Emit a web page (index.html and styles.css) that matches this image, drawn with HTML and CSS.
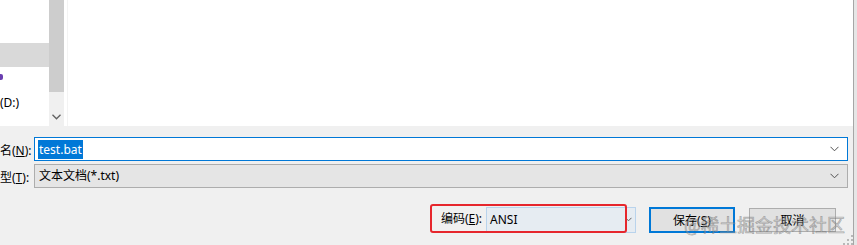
FILE: index.html
```html
<!DOCTYPE html>
<html lang="zh-CN">
<head>
<meta charset="utf-8">
<title>另存为</title>
<link rel="stylesheet" href="styles.css">
</head>
<body>
<div class="window">
  <div class="content">
    <div class="browser">
      <div class="nav">
        <div class="nav-row selected"></div>
        <div class="nav-row"><span class="purple-mark"></span></div>
        <div class="nav-row"><span class="nav-text">(D:)</span></div>
      </div>
      <div class="vscroll">
        <div class="thumb"></div>
        <div class="track">
          <svg class="arrow" width="9" height="6" viewBox="0 0 9 6"><polyline points="0.5,0.8 4.5,4.8 8.5,0.8" fill="none" stroke="#606060" stroke-width="1.3"/></svg>
        </div>
      </div>
      <div class="splitter"></div>
      <div class="files"></div>
    </div>

    <div class="fields">
      <div class="field-row">
        <div class="label">名(<u>N</u>):</div>
        <div class="input active">
          <span class="sel">test.bat</span>
          <svg class="chev" width="9" height="6" viewBox="0 0 9 6"><polyline points="0.5,0.8 4.5,4.8 8.5,0.8" fill="none" stroke="#505050" stroke-width="1"/></svg>
        </div>
      </div>
      <div class="field-row">
        <div class="label">型(<u>T</u>):</div>
        <div class="input combo">
          <span class="val">文本文档(*.txt)</span>
          <svg class="chev" width="9" height="6" viewBox="0 0 9 6"><polyline points="0.5,0.8 4.5,4.8 8.5,0.8" fill="none" stroke="#505050" stroke-width="1"/></svg>
        </div>
      </div>
    </div>

    <div class="actions">
      <div class="encoding">
        <span class="enc-label">编码(<u>E</u>):</span>
        <div class="enc-combo">
          <span class="val">ANSI</span>
          <svg class="chev small" width="7" height="5" viewBox="0 0 7 5"><polyline points="0.5,0.8 3.5,3.8 6.5,0.8" fill="none" stroke="#606060" stroke-width="1"/></svg>
        </div>
        <div class="highlight-box"></div>
      </div>
      <div class="btn primary">保存(<u>S</u>)</div>
      <div class="btn">取消</div>
    </div>

    <div class="watermark">@稀土掘金技术社区</div>
    <svg class="grip" width="10" height="10" viewBox="0 0 10 10">
      <rect x="8" y="0" width="2" height="2" fill="#b8b8b8"/>
      <rect x="4" y="4" width="2" height="2" fill="#b8b8b8"/>
      <rect x="8" y="4" width="2" height="2" fill="#b8b8b8"/>
      <rect x="0" y="8" width="2" height="2" fill="#b8b8b8"/>
      <rect x="4" y="8" width="2" height="2" fill="#b8b8b8"/>
      <rect x="8" y="8" width="2" height="2" fill="#b8b8b8"/>
    </svg>
  </div>
  <div class="frame-edge"></div>
</div>
</body>
</html>
```

FILE: styles.css
```css
html, body {
  margin: 0;
  padding: 0;
  background: #f0f0f0;
  overflow: hidden;
}
body {
  font-family: "Segoe UI", "Noto Sans", "Noto Sans CJK SC", sans-serif;
  font-size: 12px;
  color: #000;
}
u { text-decoration: underline; text-underline-offset: 1px; }

.window {
  display: flex;
  width: 857px;
  height: 245px;
}
.content {
  width: 853px;
  position: relative;
}
.frame-edge {
  width: 4px;
  border-left: 1px solid #a6a6a6;
  background: #e6e6e6;
  box-sizing: border-box;
}

.browser {
  display: flex;
  height: 126px;
  background: #fff;
}
.nav {
  width: 49px;
  padding-top: 43px;
  box-sizing: border-box;
  overflow: hidden;
}
.nav-row {
  height: 24px;
  display: flex;
  align-items: center;
  white-space: nowrap;
}
.nav-row.selected { background: #d9d9d9; }
.nav-text { line-height: 16px; margin-top: 0; }
.purple-mark {
  width: 3px;
  height: 6px;
  background: #6a3fb0;
  border-radius: 0 2px 2px 0;
  margin-top: -4px;
}
.vscroll {
  width: 15px;
  display: flex;
  flex-direction: column;
}
.thumb {
  height: 92px;
  background: #cdcdcd;
}
.track {
  flex: 1;
  background: #f0f0f0;
  display: flex;
  align-items: flex-end;
  justify-content: center;
  padding-bottom: 6px;
}
.splitter {
  width: 3px;
  border-right: 1px solid #f3f3f3;
}
.files { flex: 1; }

.fields {
  display: flex;
  flex-direction: column;
  gap: 3px;
  padding-top: 11px;
}
.field-row {
  display: flex;
  align-items: center;
  height: 24px;
}
.label {
  width: 34px;
  white-space: nowrap;
  padding-top: 1px;
}
.input {
  width: 814px;
  height: 24px;
  box-sizing: border-box;
  display: flex;
  align-items: center;
  padding-left: 3px;
  padding-right: 8px;
}
.input.active {
  background: #fff;
  border: 1px solid #0078d7;
}
.input.combo {
  background: #e5e5e5;
  border: 1px solid #adadad;
  padding-left: 4px;
}
.sel {
  background: #0078d7;
  color: #fff;
  line-height: 19px;
  padding: 0 1px;
}
.val { line-height: 18px; }
.chev { margin-left: auto; }

.actions {
  display: flex;
  align-items: center;
  justify-content: flex-end;
  padding-top: 15px;
  padding-right: 17px;
}
.encoding {
  position: relative;
  display: flex;
  align-items: center;
  gap: 4px;
  height: 29px;
  margin-right: 13px;
}
.enc-label { white-space: nowrap; }
.enc-combo {
  width: 150px;
  height: 26px;
  box-sizing: border-box;
  margin-top: 4px;
  background: #e6ecf2;
  border: 1px solid #b9d3ec;
  display: flex;
  align-items: center;
  padding-left: 3px;
  padding-right: 3px;
}
.chev.small { margin-bottom: 2px; }
.highlight-box {
  position: absolute;
  left: -11px;
  top: 0;
  width: 197px;
  height: 29px;
  box-sizing: border-box;
  border: 2px solid #e6262c;
  border-radius: 3px;
}
.btn {
  width: 87px;
  height: 24px;
  margin-top: 4px;
  box-sizing: border-box;
  border: 1px solid #adadad;
  background: #e1e1e1;
  display: flex;
  align-items: center;
  justify-content: center;
  white-space: nowrap;
}
.btn.primary {
  width: 86px;
  height: 26px;
  border: 2px solid #0078d7;
  margin-right: 14px;
}
.watermark {
  position: absolute;
  left: 684px;
  top: 211px;
  font-family: "Noto Sans CJK SC", sans-serif;
  font-size: 18px;
  line-height: 26px;
  color: rgba(170, 170, 170, 0.4);
  -webkit-text-stroke: 0.6px rgba(110, 110, 110, 0.55);
  letter-spacing: 0px;
  white-space: nowrap;
  pointer-events: none;
}
.grip {
  position: absolute;
  right: 0;
  bottom: 0;
}
```
